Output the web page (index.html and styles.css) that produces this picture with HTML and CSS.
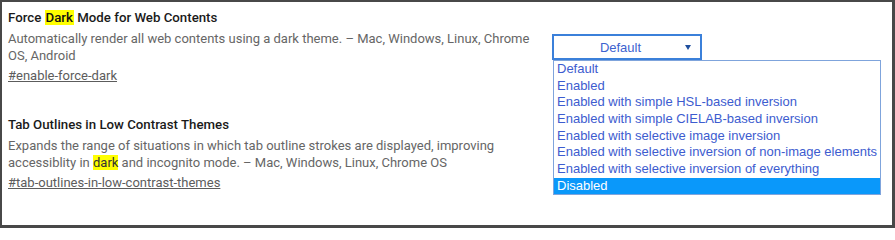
FILE: index.html
```html
<!DOCTYPE html>
<html>
<head>
<meta charset="utf-8">
<link rel="stylesheet" href="styles.css">
</head>
<body>
<div class="frame">
  <div class="experiment">
    <div class="info">
      <h3 class="title">Force <mark class="hl">Dark</mark> Mode for Web Contents</h3>
      <p class="desc">Automatically render all web contents using a dark theme. – Mac, Windows, Linux, Chrome OS, Android</p>
      <a class="permalink" href="#enable-force-dark">#enable-force-dark</a>
    </div>
    <div class="control">
      <div class="select">
        <span class="select-value">Default</span>
        <svg class="arrow" width="6" height="5" viewBox="0 0 6 5"><polygon points="0,0 6,0 3,5" fill="#1f4f9e"/></svg>
      </div>
      <ul class="options">
        <li>Default</li>
        <li>Enabled</li>
        <li>Enabled with simple HSL-based inversion</li>
        <li>Enabled with simple CIELAB-based inversion</li>
        <li>Enabled with selective image inversion</li>
        <li>Enabled with selective inversion of non-image elements</li>
        <li>Enabled with selective inversion of everything</li>
        <li class="selected">Disabled</li>
      </ul>
    </div>
  </div>
  <div class="experiment second">
    <div class="info">
      <h3 class="title">Tab Outlines in Low Contrast Themes</h3>
      <p class="desc">Expands the range of situations in which tab outline strokes are displayed, improving accessiblity in <mark class="hl">dark</mark> and incognito mode. – Mac, Windows, Linux, Chrome OS</p>
      <a class="permalink" href="#tab-outlines-in-low-contrast-themes">#tab-outlines-in-low-contrast-themes</a>
    </div>
  </div>
</div>
</body>
</html>
```

FILE: styles.css
```css
html, body {
  margin: 0;
  padding: 0;
  background: #ffffff;
}

.frame {
  box-sizing: border-box;
  width: 895px;
  height: 228px;
  border-style: solid;
  border-color: #484848;
  border-width: 2px 3px 3px 2px;
  padding: 7px 0 0 6px;
  font-family: Roboto, "Liberation Sans", sans-serif;
  font-size: 13px;
  overflow: hidden;
}

.experiment {
  display: flex;
  align-items: flex-start;
}

.experiment.second {
  margin-top: 32px;
}

.info {
  width: 535px;
  flex: none;
}

.title {
  margin: 0;
  font-size: 13.25px;
  font-weight: 500;
  line-height: 17px;
  color: #1a1a1a;
}

.hl {
  background: #ffff00;
  color: #111;
}

.title .hl {
  padding: 0 1px;
}

.desc {
  margin: 4px 0 0;
  line-height: 17px;
  color: #666666;
}

.desc .hl {
  color: #333;
}

.permalink {
  display: block;
  margin-top: 3px;
  line-height: 17px;
  color: #5c5c5c;
  text-decoration: underline;
}

.control {
  position: relative;
  margin-left: 9px;
  margin-top: 25px;
  font-family: "Liberation Sans", Arial, sans-serif;
  font-size: 13px;
}

.select {
  box-sizing: border-box;
  width: 150px;
  height: 26px;
  border: 2px solid #3b80da;
  display: flex;
  align-items: center;
  padding-right: 9px;
  color: #3d62cf;
}

.select-value {
  flex: 1;
  text-align: center;
  padding-left: 2px;
}

.arrow {
  display: block;
  flex: none;
}

.options {
  position: absolute;
  top: 26px;
  left: 1px;
  box-sizing: border-box;
  width: 328px;
  margin: 0;
  padding: 0;
  list-style: none;
  background: #ffffff;
  border: 1px solid #7fa4dc;
}

.options li {
  height: 16.67px;
  line-height: 16.67px;
  padding-left: 3px;
  color: #3d5ccf;
  white-space: nowrap;
}

.options li.selected {
  background: #0a98fa;
  color: #ffffff;
}
```
